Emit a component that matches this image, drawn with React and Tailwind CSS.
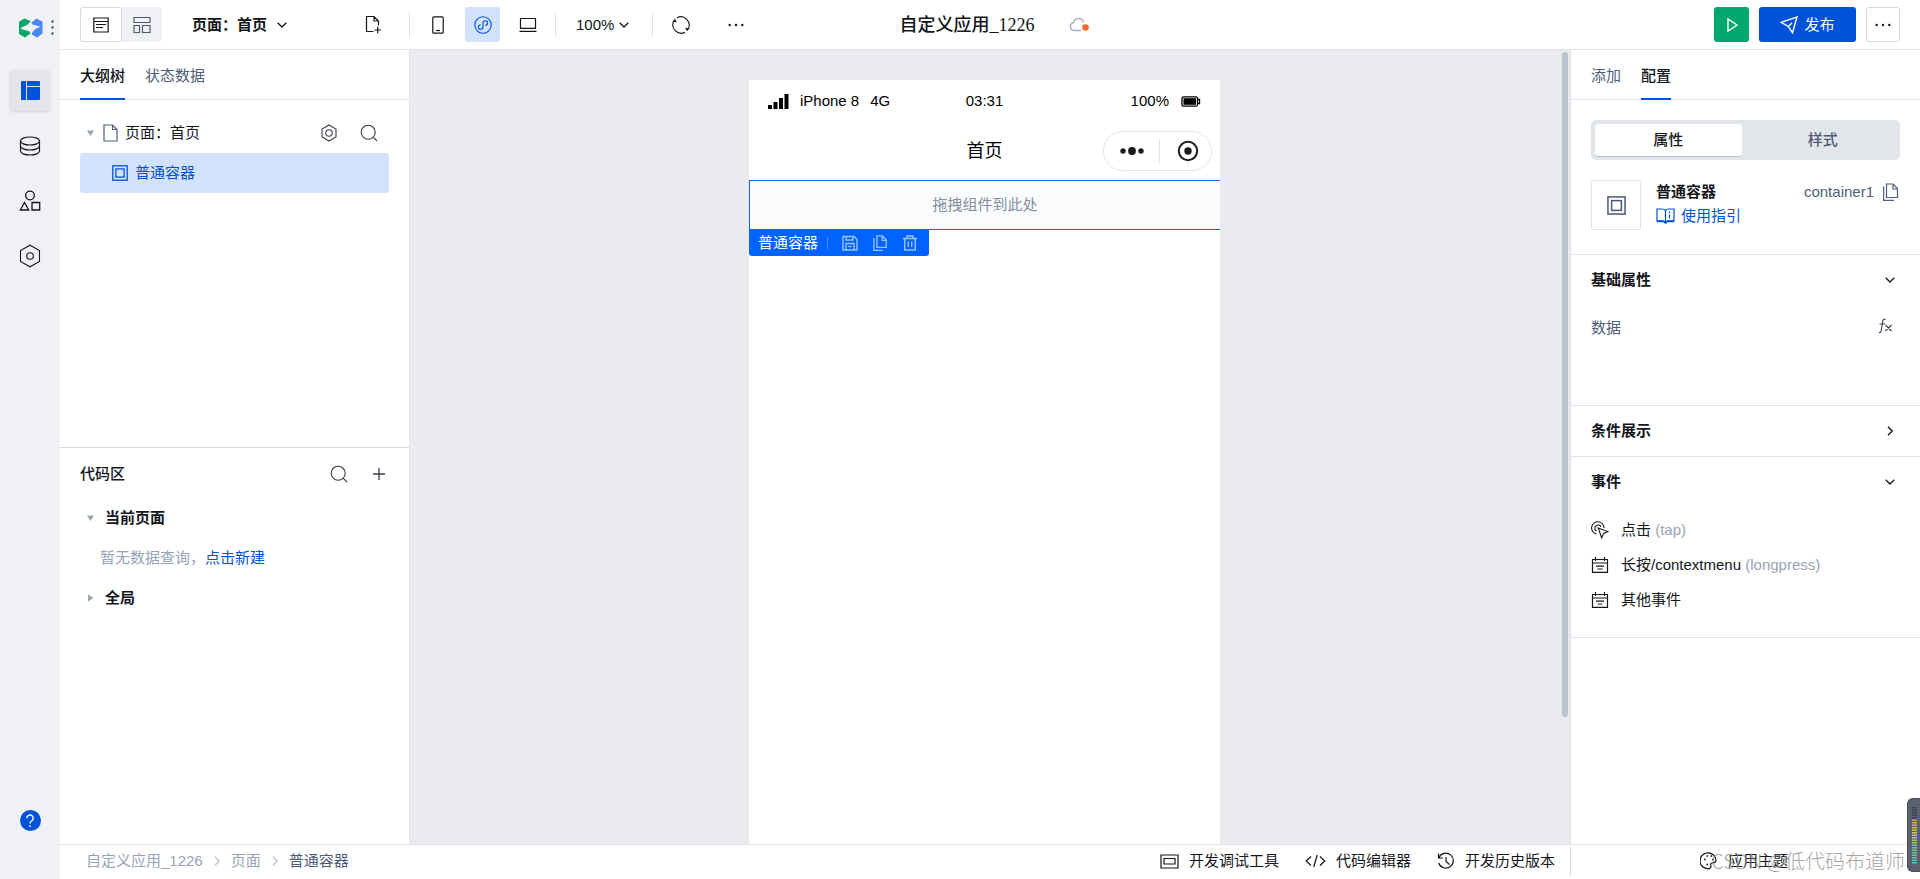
import React from "react";

const Icon = ({ w = 18, h = 18, box, sw = 1.2, className = "", children }) => (
  <svg
    aria-hidden="true"
    width={w}
    height={h}
    viewBox={box || `0 0 ${w} ${h}`}
    fill="none"
    stroke="currentColor"
    strokeWidth={sw}
    className={`shrink-0 ${className}`}
  >
    {children}
  </svg>
);

const ChevronDown = () => (
  <Icon w={10} h={10} sw={1.3}>
    <path d="M0.7 2.8L5 7l4.3-4.200" />
  </Icon>
);
const ChevronRight = ({ className }) => (
  <Icon w={10} h={10} sw={1.4} className={className}>
    <path d="M3 0.7L7.200 5 3 9.300" />
  </Icon>
);
const Search = () => (
  <Icon sw={1.1}>
    <circle cx="8.2" cy="8.2" r="7" />
    <path d="M13.3 13.3l3.7 3.7" />
  </Icon>
);
const Hexagon = () => (
  <Icon w={18} h={18} sw={1.1}>
    <path d="M9 1l7 4v8l-7 4-7-4V5z" />
    <circle cx="9" cy="9" r="3.2" />
  </Icon>
);
const NestedSquares = ({ size = 16 }) => (
  <Icon w={size} h={size} box="0 0 16 16" sw={1.3}>
    <rect x="0.8" y="0.8" width="14.4" height="14.4" />
    <rect x="3.9" y="3.9" width="8.2" height="8.2" />
  </Icon>
);
const Copy = () => (
  <Icon w={17} h={18} sw={1.2}>
    <path d="M4.500 1h6.500l4.500 4.500V14.500H4.500z" />
    <path d="M11 1v5h4.5" />
    <path d="M1.6 3.5v13.800h10.400" />
  </Icon>
);
const EventIcon = () => (
  <Icon w={18} h={18} sw={1.2}>
    <path d="M1.5 3.5h15v12.8h-15zM1.5 7h15M4.500 1v4M13.500 1v4M5 10.2h8M6.5 13h5" />
  </Icon>
);
const TapIcon = () => (
  <Icon w={18} h={18} sw={1.1}>
    <path d="M5.500 13A6.200 6.200 0 1 1 13 7" />
    <path d="M5.6 10.2A3.3 3.3 0 1 1 10 5.6" />
    <path d="M7.2 7l9.8 3.600-4.400 1.800-1.900 4.600z" />
  </Icon>
);
const Dots = () => (
  <Icon w={16} h={4} className="fill-current stroke-none">
    <circle cx="1.7" cy="2" r="1.2" />
    <circle cx="8" cy="2" r="1.2" />
    <circle cx="14.3" cy="2" r="1.2" />
  </Icon>
);
const Caret = ({ open }) => (
  <Icon w={8} h={8} className="fill-[#97a3b7] stroke-none">
    <path d={open ? "M0 1.500h7L3.500 7z" : "M1 0.5v7L6.500 4z"} />
  </Icon>
);

const ToolButton = ({ label, active, children }) => (
  <button
    aria-label={label}
    className={`flex size-[35px] items-center justify-center rounded-[3px] ${
      active ? "bg-[#d3e2fc] text-[#0052d9]" : ""
    }`}
  >
    {children}
  </button>
);

const Divider = () => <span className="h-6 w-px bg-[#dcdfe6]" />;

const Rail = () => (
  <nav className="flex w-[60px] shrink-0 flex-col items-center bg-[#f0f1f5]">
    <div className="flex h-[55px] w-full items-center gap-2 pl-[19px]">
      <svg aria-hidden="true" width="24" height="20" viewBox="0 0 24 20" className="shrink-0">
        <path d="M0 3.800L5.500 0.400 11.500 3V15.500L6 19.600 0 16z" fill="#0aa66b" />
        <path d="M12 5L17.500 0.400 23.500 3.800V15.500L18 19.600 12 16z" fill="#4886f5" />
        <path
          d="M1.500 10.800C4 7.500 8 8.500 11.500 3.500L13.500 6.500C16 7 19 8 22 8.800C18 10 15 11 12.500 16.500L10.500 13.500C8 12.800 4.500 11.800 1.500 10.800z"
          fill="#f0f1f5"
        />
      </svg>
      <Icon w={3} h={15} className="fill-[#4f5a70] stroke-none">
        <circle cx="1.5" cy="1.5" r="1.2" />
        <circle cx="1.5" cy="7.5" r="1.2" />
        <circle cx="1.5" cy="13.5" r="1.2" />
      </Icon>
    </div>
    <div className="mt-[15px] flex flex-1 flex-col items-center gap-[15px]">
      <button
        aria-label="页面设计"
        className="flex h-[41px] w-10 items-center justify-center rounded-[3px] bg-[#e3e5ea] text-[#0052d9] shadow"
      >
        <Icon w={19} h={19} className="fill-current stroke-none">
          <path d="M1 0h4v19H1a1 1 0 0 1-1-1V1a1 1 0 0 1 1-1zM6 0H18a1 1 0 0 1 1 1v4H6zM6 6H19V18a1 1 0 0 1-1 1H6z" />
        </Icon>
      </button>
      <button aria-label="数据源" className="flex size-10 items-center justify-center">
        <Icon w={22} h={20} sw={1.2}>
          <ellipse cx="11" cy="5" rx="9.5" ry="4" />
          <path d="M1.5 5v10c0 2.2 4.2 4 9.500 4s9.500-1.800 9.500-4V5M1.500 10c0 2.200 4.200 4 9.500 4s9.500-1.800 9.500-4" />
        </Icon>
      </button>
      <button aria-label="组件" className="flex size-10 items-center justify-center">
        <Icon w={22} h={22} sw={1.3}>
          <circle cx="11" cy="5.500" r="4.300" />
          <path d="M5.500 12.500l4.200 7.500H1.300zM13 12.500h7.700V20H13z" />
        </Icon>
      </button>
      <button aria-label="设置" className="flex size-10 items-center justify-center">
        <Icon w={22} h={24} sw={1.1}>
          <path d="M11 1.200l9.500 5.300v11L11 22.800l-9.500-5.300v-11z" />
          <circle cx="11" cy="12" r="3.300" />
        </Icon>
      </button>
    </div>
    <button
      aria-label="帮助"
      className="mb-12 flex size-[21px] items-center justify-center rounded-full bg-[#0052d9] text-white"
    >
      <Icon w={10} h={14} sw={1.4}>
        <path d="M1.800 4.200a3.200 3.200 0 1 1 4.800 2.800C5.400 7.700 5 8.200 5 9.600M5 11.300v1.700" />
      </Icon>
    </button>
  </nav>
);

const Header = () => (
  <header className="grid h-[50px] shrink-0 grid-cols-[1fr_auto_1fr] items-center border-b border-[#e0e3e9] px-5">
    <div className="flex items-center">
      <div className="flex w-[329px] items-center">
        <div className="flex h-[35px] rounded-[3px] bg-[#f0f1f5]">
          <button
            aria-label="大纲视图"
            className="flex w-[42px] items-center justify-center rounded-[3px] border border-[#d5d9e3] bg-white"
          >
            <Icon w={16} h={16} sw={1.2}>
              <path d="M0.800 1h14.400v14H0.800zM0.800 4.500h14.400M3 7.500h10M3 10.500h7" />
            </Icon>
          </button>
          <button
            aria-label="布局视图"
            className="flex w-10 items-center justify-center text-[#4f5a70]"
          >
            <Icon w={18} h={18} sw={1.2}>
              <path d="M1 1.500h16v5H1zM1 9.500h5.500v7H1zM9.500 9.500H17v7H9.500z" />
            </Icon>
          </button>
        </div>
        <button className="ml-[30px] flex items-center gap-[10px] font-bold">
          页面：首页
          <ChevronDown />
        </button>
        <button aria-label="新建页面" className="mr-[27px] ml-auto">
          <Icon w={17} h={19} sw={1.2}>
            <path d="M8.500 16.500H1.500v-15H9l4.500 4.500v4.500M9 1.500V6h4.500M12.700 11.800v6.400M9.500 15h6.400" />
          </Icon>
        </button>
      </div>
      <Divider />
      <div className="mx-[10px] flex gap-[10px]">
        <ToolButton label="手机">
          <Icon w={12} h={18} sw={1.2}>
            <rect x="0.800" y="0.800" width="10.400" height="16.400" rx="1" />
            <path d="M4 14.500h4" />
          </Icon>
        </ToolButton>
        <ToolButton label="小程序" active>
          <Icon w={18} h={18} sw={1.1}>
            <circle cx="9" cy="9" r="8.200" />
            <path d="M6.700 8.700A2.300 2.300 0 1 0 9 11V7A2.300 2.300 0 1 1 11.300 9.300" />
          </Icon>
        </ToolButton>
        <ToolButton label="电脑">
          <Icon w={18} h={16} sw={1.2}>
            <path d="M1.500 1.500h15v9.800h-15zM0.500 14.300h17" />
          </Icon>
        </ToolButton>
      </div>
      <Divider />
      <button className="mr-[23px] ml-5 flex items-center gap-[5px]">
        100%
        <ChevronDown />
      </button>
      <Divider />
      <div className="ml-[10px] flex gap-5">
        <ToolButton label="刷新">
          <Icon w={20} h={20} sw={1.1}>
            <path d="M6 2.800A8.300 8.300 0 0 1 17.200 14M14 17.200A8.300 8.300 0 0 1 2.800 6" />
            <path d="M1.500 6.800L4 3.800l1.800 3.400zM18.500 13.200L16 16.200l-1.800-3.400z" fill="currentColor" stroke="none" />
          </Icon>
        </ToolButton>
        <ToolButton label="更多工具">
          <Dots />
        </ToolButton>
      </div>
    </div>
    <div className="flex items-center gap-[34px] pl-[9px]">
      <h1 className="font-['Liberation_Serif','Noto_Sans_CJK_SC',serif] text-lg leading-6 font-medium">
        自定义应用_1226
      </h1>
      <Icon w={21} h={16} sw={1.5} className="text-[#a9b1c2]">
        <path d="M12 13.500H5A3.900 3.900 0 0 1 4.500 5.800 5.200 5.200 0 0 1 14.600 5.300" />
        <circle cx="16.500" cy="10.500" r="3.300" fill="#f0692f" stroke="none" />
      </Icon>
    </div>
    <div className="flex items-center justify-end gap-[10px]">
      <button
        aria-label="预览"
        className="flex size-[35px] items-center justify-center rounded-[3px] bg-[#00a870] text-white"
      >
        <Icon w={12} h={14} sw={1.400}>
          <path d="M2 1l9 6-9 6z" />
        </Icon>
      </button>
      <button className="flex h-[35px] w-[97px] items-center justify-center gap-[6px] rounded-[3px] bg-[#0052d9] text-white">
        <Icon w={18} h={18} sw={1.400}>
          <path d="M1 6.300L17 1l-4.500 15.800-4.200-6.300zM8.300 10.500L12 7" />
        </Icon>
        发布
      </button>
      <button
        aria-label="更多"
        className="flex h-[35px] w-[34px] items-center justify-center rounded-[3px] border border-[#d5d9e3]"
      >
        <Dots />
      </button>
    </div>
  </header>
);

const Tab = ({ active, children }) => (
  <button
    role="tab"
    aria-selected={!!active}
    className={`h-[50px] border-b-2 pt-[3px] ${
      active ? "border-[#0052d9] font-medium" : "border-transparent text-[#4f5d79]"
    }`}
  >
    {children}
  </button>
);

const TabBar = ({ children }) => (
  <div
    role="tablist"
    className="flex h-[50px] shrink-0 gap-5 bg-[linear-gradient(#e0e3e9,#e0e3e9)] bg-[length:100%_1px] bg-bottom bg-no-repeat px-5"
  >
    {children}
  </div>
);

const LeftPanel = () => (
  <aside className="grid w-[350px] shrink-0 grid-rows-2 border-r border-[#e0e3e9]">
    <section className="flex min-h-0 flex-col">
      <TabBar>
        <Tab active>大纲树</Tab>
        <Tab>状态数据</Tab>
      </TabBar>
      <div className="px-5 pt-[13px]">
        <div className="flex h-10 items-center pl-[7px]">
          <Caret open />
          <Icon w={15} h={18} sw={1.2} className="mr-[7px] ml-2 text-[#4f5d79]">
            <path d="M1 1h8.500L14 5.500V17H1zM9.500 1v4.500H14" />
          </Icon>
          <span>页面：首页</span>
          <div className="mr-[11px] ml-auto flex gap-[22px] text-[#383d47]">
            <button aria-label="页面设置">
              <Hexagon />
            </button>
            <button aria-label="搜索">
              <Search />
            </button>
          </div>
        </div>
        <button className="flex h-10 w-full items-center gap-[7px] rounded-[3px] bg-[#d3e2fc] pl-8 text-[#0052d9]">
          <NestedSquares />
          普通容器
        </button>
      </div>
    </section>
    <section className="flex min-h-0 flex-col border-t border-[#d3d8e1] px-5 pt-[6px]">
      <div className="flex h-10 items-center">
        <h2 className="font-medium">代码区</h2>
        <div className="mr-1 ml-auto flex items-center gap-[25px] text-[#383d47]">
          <button aria-label="搜索代码">
            <Search />
          </button>
          <button aria-label="新增代码">
            <Icon w={12} h={12} sw={1.300}>
              <path d="M6 0v12M0 6h12" />
            </Icon>
          </button>
        </div>
      </div>
      <button className="mt-1 flex h-10 items-center gap-[10px] pl-[7px] font-bold">
        <Caret open />
        当前页面
      </button>
      <p className="flex h-10 items-center pl-5 text-[#97a3b7]">
        暂无数据查询，
        <a href="#new" className="text-[#0052d9]">
          点击新建
        </a>
      </p>
      <button className="flex h-10 items-center gap-[10px] pl-[7px] font-bold">
        <Caret />
        全局
      </button>
    </section>
  </aside>
);

const Phone = () => (
  <div className="flex w-[471px] flex-1 flex-col bg-white text-black">
    <div className="grid h-[42px] shrink-0 grid-cols-3 items-center px-[19px]">
      <div className="flex items-center gap-[11px]">
        <Icon w={21} h={15} className="fill-current stroke-none">
          <path d="M0 11h4v4H0zM5.500 8h4v7h-4zM11 4h4v11h-4zM16.500 0h4v15h-4z" />
        </Icon>
        <span>iPhone 8</span>
        <span>4G</span>
      </div>
      <span className="text-center">03:31</span>
      <div className="flex items-center justify-end gap-3">
        <span>100%</span>
        <Icon w={20} h={11} sw={1.300}>
          <rect x="1" y="0.800" width="15.500" height="9.400" rx="1.500" />
          <rect x="2.500" y="2.200" width="12.500" height="6.600" fill="currentColor" stroke="none" />
          <path d="M17 3.500h1.500v4H17" />
        </Icon>
      </div>
    </div>
    <div className="grid h-[58px] shrink-0 grid-cols-[1fr_auto_1fr] items-center px-2">
      <span className="col-start-2 text-lg leading-6">首页</span>
      <div className="flex h-10 w-[109px] items-center justify-self-end rounded-full border border-[#e4e6ec] text-[#1b1b1b]">
        <button aria-label="菜单" className="flex w-[55px] justify-center">
          <Icon w={24} h={8} className="fill-current stroke-none">
            <circle cx="3" cy="4" r="2.700" />
            <circle cx="12" cy="4" r="3.900" />
            <circle cx="21" cy="4" r="2.700" />
          </Icon>
        </button>
        <span className="h-6 w-px bg-[#e4e6ec]" />
        <button aria-label="关闭" className="flex flex-1 justify-center pl-1">
          <Icon w={22} h={22} sw={2}>
            <circle cx="11" cy="11" r="9.200" />
            <circle cx="11" cy="11" r="3.700" fill="currentColor" stroke="none" />
          </Icon>
        </button>
      </div>
    </div>
    <div className="flex h-[50px] shrink-0 items-center justify-center border border-r-0 border-[#0062ff] bg-[#fafbfd] text-[#868e9e]">
      拖拽组件到此处
    </div>
    <div className="flex h-[26px] w-[180px] items-center rounded-b-[3px] bg-[#0062ff] pl-[9px] text-[#9ec3ff]">
      <span className="text-white">普通容器</span>
      <span className="ml-[9px] h-3 w-px bg-[#4d91ff]" />
      <div className="ml-[14px] flex gap-[14px]">
        <button aria-label="保存">
          <Icon w={16} h={16} sw={1.400}>
            <path d="M1 1.500h11l3 3V15H1zM4 1.500V5h7V1.500M4 15V8.500h8V15M6.500 11.500h3" />
          </Icon>
        </button>
        <button aria-label="复制">
          <Icon w={16} h={16} box="0 0 17 18" sw={1.500}>
            <path d="M5 1h6l4.500 4.500V14H5zM11 1v5h4.500M1.600 3.500v13.800h10.400" />
          </Icon>
        </button>
        <button aria-label="删除">
          <Icon w={16} h={16} sw={1.400}>
            <path d="M1 3.500h14M5 3.500V1h6v2.500M2.700 3.500V15h10.600V3.500M6.300 6.500v5.500M9.700 6.500v5.500" />
          </Icon>
        </button>
      </div>
    </div>
  </div>
);

const Canvas = () => (
  <main className="flex min-w-0 flex-1 bg-[#eaebef]">
    <div className="flex flex-1 flex-col items-center pt-[30px]">
      <Phone />
    </div>
    <div className="w-[11px] pt-[2px] pl-[3px]">
      <div className="h-[84%] w-[6px] rounded-full bg-[#bcc4d0]" />
    </div>
  </main>
);

const Section = ({ title, open, children }) => (
  <section className="border-t border-[#e0e3e9]">
    <button className="flex h-[50px] w-full items-center justify-between pr-[25px] pl-5 font-bold">
      {title}
      {open ? <ChevronDown /> : <ChevronRight />}
    </button>
    {children}
  </section>
);

const events = [
  { icon: TapIcon, name: "点击", code: "(tap)" },
  { icon: EventIcon, name: "长按/contextmenu", code: "(longpress)" },
  { icon: EventIcon, name: "其他事件", code: "" },
];

const RightPanel = () => (
  <aside className="flex w-[350px] shrink-0 flex-col border-l border-[#e0e3e9]">
    <TabBar>
      <Tab>添加</Tab>
      <Tab active>配置</Tab>
    </TabBar>
    <div className="mx-5 mt-5 flex h-10 rounded-[5px] bg-[#e2e5ea] p-1">
      <button className="h-8 flex-1 rounded-[3px] bg-white font-medium shadow-[0_1px_0_#bcc4d0]">
        属性
      </button>
      <button className="flex-1 pl-2 font-medium text-[#4f5d79]">样式</button>
    </div>
    <div className="flex px-5 pt-5 pb-6">
      <div className="flex size-[50px] items-center justify-center rounded-[3px] border border-[#dfe3ea] text-[#4f5d79]">
        <NestedSquares size={19} />
      </div>
      <div className="ml-[15px] flex flex-col">
        <span className="leading-6 font-bold">普通容器</span>
        <a href="#guide" className="flex items-center gap-[6px] leading-6 text-[#0052d9]">
          <Icon w={19} h={16} sw={1.2}>
            <path d="M9.500 2.500C8.500 1.300 7.500 1 6 1H1v12h5.500c1.500 0 2.400.4 3 1.500.6-1.100 1.500-1.500 3-1.500H18V1h-5c-1.500 0-2.500.3-3.500 1.500zM9.500 2.500v12M13.500 6.500v4M13.500 3.500v1.500" />
            <path d="M1 13.200h6.500l2 1.500 2-1.500H18" strokeWidth="2" />
          </Icon>
          使用指引
        </a>
      </div>
      <div className="mr-px ml-auto flex h-6 items-center gap-2 text-[#4f5d79]">
        <span>container1</span>
        <button aria-label="复制标识">
          <Copy />
        </button>
      </div>
    </div>
    <Section title="基础属性" open>
      <div className="flex h-[100px] items-start justify-between pt-[11px] pr-[27px] pl-5 text-[#4f5d79]">
        <span className="leading-6">数据</span>
        <button aria-label="绑定表达式" className="mt-[2px] text-[#383d47]">
          <Icon w={15} h={16} sw={1.1}>
            <path d="M7.500 1.500C5.800.6 5 1.600 4.700 3.500L3.200 12.500C2.900 14.300 2.200 15 .8 14.300M1.500 6h5.500M7.500 7l6 6M13.500 7l-6 6" />
          </Icon>
        </button>
      </div>
    </Section>
    <Section title="条件展示" />
    <Section title="事件" open>
      <ul className="flex flex-col pt-[5px] pb-5">
        {events.map(({ icon: EvIcon, name, code }) => (
          <li key={name}>
            <button className="flex h-[35px] items-center gap-3 pl-5">
              <EvIcon />
              <span>
                {name} <span className="text-[#97a3b7]">{code}</span>
              </span>
            </button>
          </li>
        ))}
      </ul>
    </Section>
    <div className="border-t border-[#e0e3e9]" />
  </aside>
);

const Footer = () => (
  <footer className="relative flex h-[35px] shrink-0 items-center border-t border-[#e0e3e9] pb-[2px]">
    <nav className="flex items-center gap-[9px] pl-[26px] text-[#97a3b7]">
      <a href="#app">自定义应用_1226</a>
      <ChevronRight className="text-[#bcc4d0]" />
      <a href="#pages">页面</a>
      <ChevronRight className="text-[#bcc4d0]" />
      <a href="#container" className="text-[#4b5b76]">
        普通容器
      </a>
    </nav>
    <div className="ml-auto flex h-full items-center gap-[26px] pr-[15px]">
      <button className="flex items-center gap-[10px]">
        <Icon w={19} h={15} sw={1.2}>
          <path d="M1 1h17v13H1zM4 4.500h11v5.500H4z" />
        </Icon>
        开发调试工具
      </button>
      <button className="flex items-center gap-[10px]">
        <Icon w={21} h={14} sw={1.2}>
          <path d="M6 2.500L1.200 7 6 11.500M15 2.500L19.800 7 15 11.500M12.300 1L8.700 13" />
        </Icon>
        代码编辑器
      </button>
      <button className="flex items-center gap-[10px]">
        <Icon w={18} h={18} sw={1.2}>
          <path d="M2 5.500A7.500 7.500 0 1 1 1.700 11M1.500 1.500V6H6M9 5v4.500l3.500 3" />
        </Icon>
        开发历史版本
      </button>
    </div>
    <div className="flex h-7 w-[350px] items-center border-l border-[#d3d8e1] pl-[129px]">
      <button className="flex items-center gap-[11px]">
        <Icon w={17} h={18} sw={1.2}>
          <path d="M8 16.800A8 8 0 1 1 16 8.500c0 2.500-2.500 2.300-4 2.500-1.600.3-1.500 1.500-1.200 2.600.5 1.700-.8 3.200-2.800 3.200z" />
          <path d="M4 7.500h1.600M6.500 4h1.600M10.500 4h1.600M12 7.500h1.600M6.500 12.500h1.600" strokeWidth="1.700" />
        </Icon>
        应用主题
      </button>
    </div>
    <span className="pointer-events-none absolute right-[15px] bottom-[2px] font-['Noto_Sans_CJK_SC',sans-serif] text-xl leading-8 font-light text-[#8c8c8c]/80">
      CSDN @低代码布道师
    </span>
  </footer>
);

const meterColors = [
  "#3c4250", "#3c4250", "#3c4250", "#3c4250", "#3c4250",
  "#d99a55", "#d9a24f", "#d9ae4f", "#d9b84f", "#d6c250", "#cfc853", "#c6ca57",
  "#b8ca5c", "#a8c962", "#9ac868", "#8cc76e", "#7fc677", "#72c683", "#68c78f",
  "#5dc89a", "#54caa6", "#4cccb0", "#4cccb0",
];

const Meter = () => (
  <div className="absolute right-0 bottom-[7px] rounded-l-md border border-r-0 border-[#484d59] bg-[#5b6070]">
    <svg aria-hidden="true" width="12" height="72" viewBox="0 0 12 72">
      {meterColors.map((c, i) => (
        <rect key={i} x="4" y={8 + i * 2.5} width="5" height="1.500" fill={c} />
      ))}
    </svg>
  </div>
);

export default function App() {
  return (
    <div className="relative flex h-screen overflow-hidden bg-white font-['Liberation_Sans','Noto_Sans_CJK_SC',sans-serif] text-[15px] leading-5 text-[#13161b]">
      <Rail />
      <div className="flex min-w-0 flex-1 flex-col">
        <Header />
        <div className="flex min-h-0 flex-1">
          <LeftPanel />
          <Canvas />
          <RightPanel />
        </div>
        <Footer />
      </div>
      <Meter />
    </div>
  );
}
